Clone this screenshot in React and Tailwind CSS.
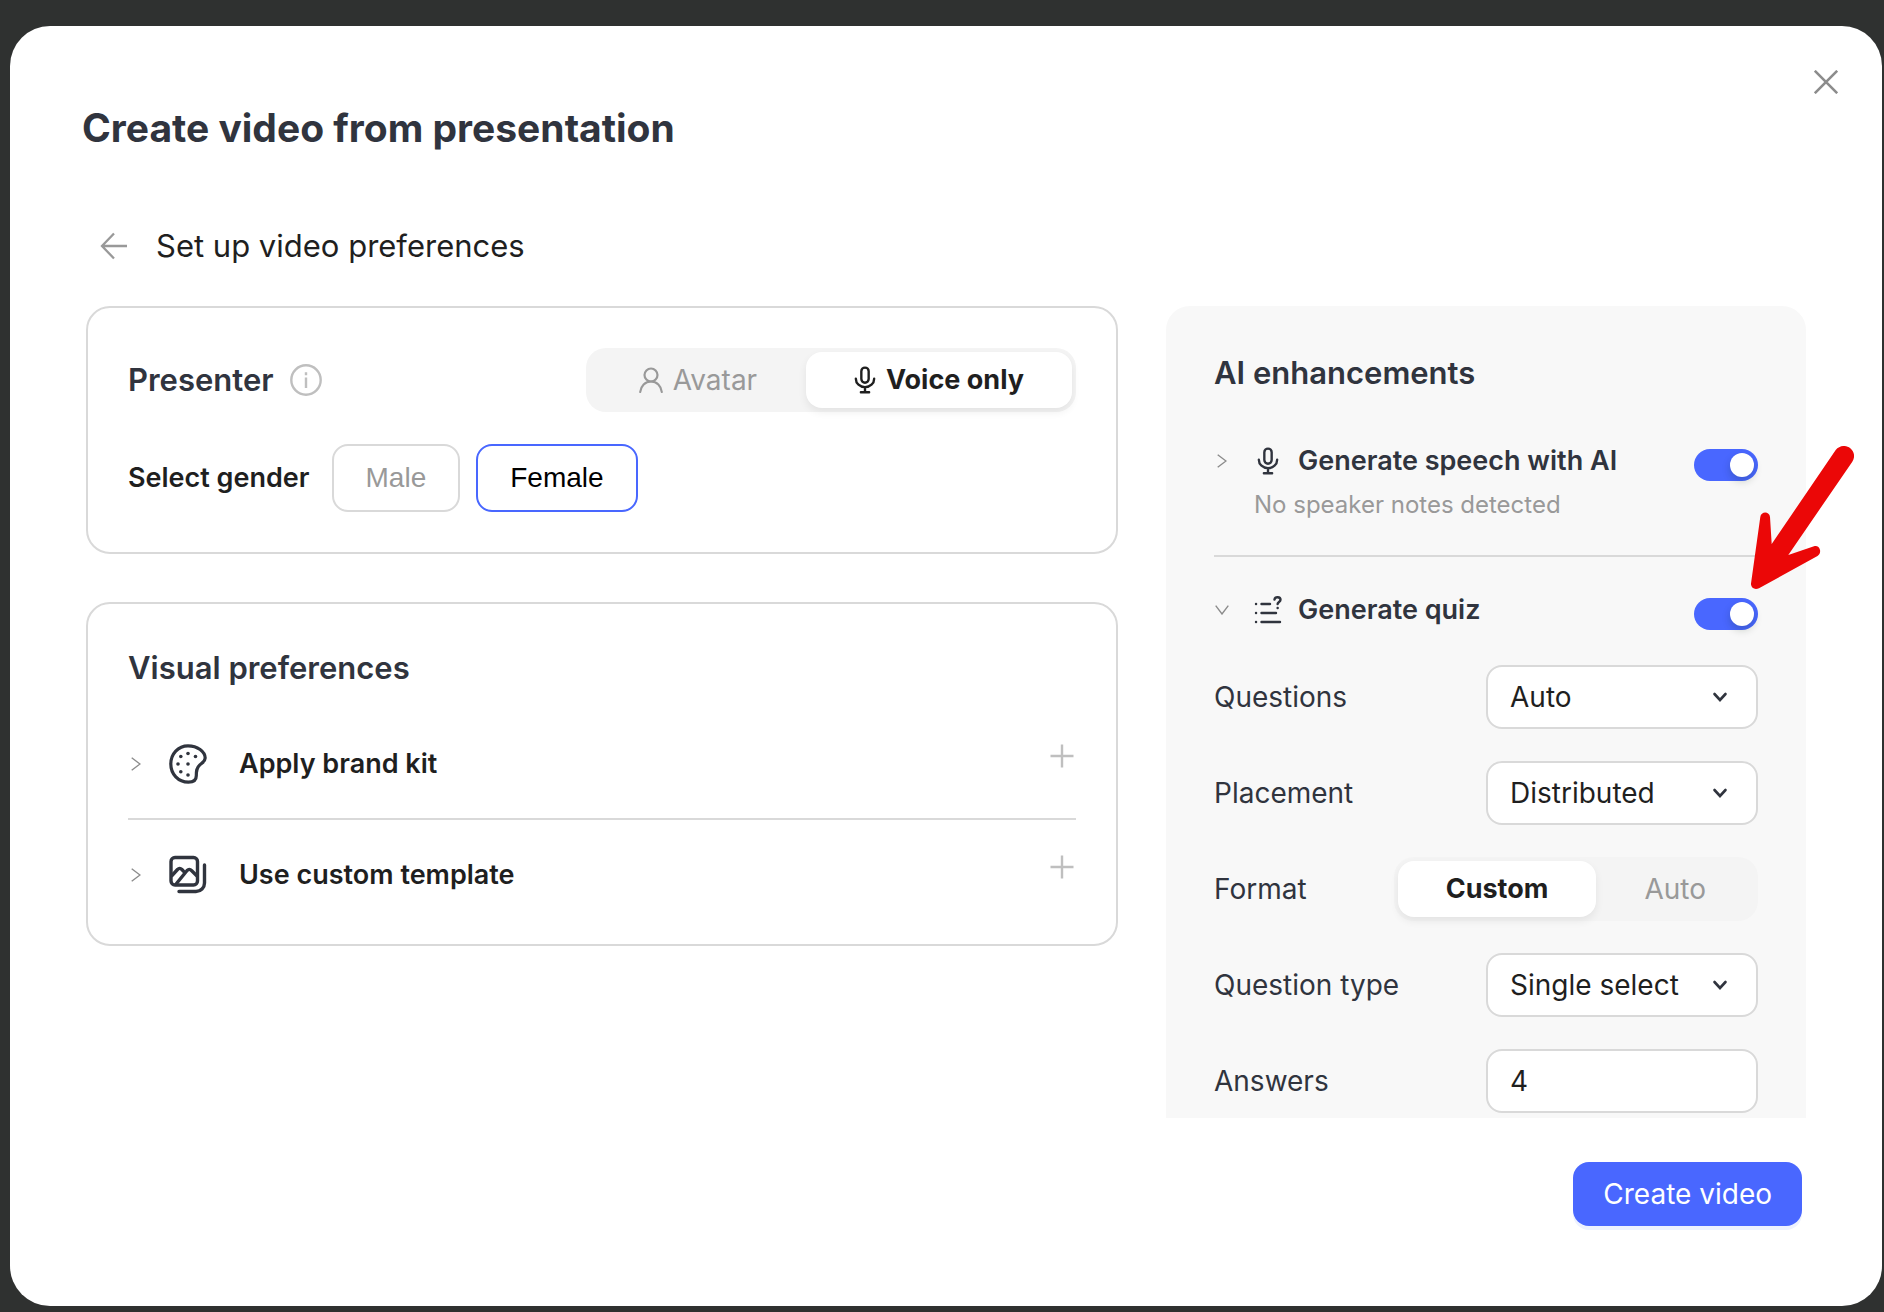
import React, { useState } from "react";

const MicIcon = ({ className }) => (
  <svg className={className} viewBox="0 0 24 30" fill="none" stroke="currentColor" strokeWidth="2.6" strokeLinecap="round">
    <rect x="8" y="1.5" width="8" height="16.5" rx="4" />
    <path d="M2 13.5c0 5.2 4.4 9.3 10 9.3s10-4.100 10-9.300M12 23v5M7.500 28.300h9" />
  </svg>
);

const UserIcon = ({ className }) => (
  <svg className={className} viewBox="0 0 24 26" fill="none" stroke="currentColor" strokeWidth="2.200" strokeLinecap="round">
    <circle cx="12" cy="8" r="6.500" />
    <path d="M1.200 25C1.800 18.900 6.200 14.500 12 14.500s10.200 4.400 10.800 10.500" />
  </svg>
);

const PaletteIcon = ({ className }) => (
  <svg className={className} viewBox="0 0 38 40" fill="none" stroke="currentColor" strokeWidth="3.200">
    <path d="M19 1.800C9.200 1.800 1.800 9.900 1.800 20S9.200 38.200 19.400 38.200c5.200 0 7.900-2.300 7.900-6.400 0-5.200.2-7.800 3.300-10.700 2.500-2.300 5.600-3.600 5.600-7C36.200 7.500 28.400 1.800 19 1.800z" />
    <g fill="currentColor" stroke="none">
      <circle cx="19" cy="9.500" r="1.800" />
      <circle cx="26.500" cy="12.500" r="1.800" />
      <circle cx="11.800" cy="12.500" r="1.800" />
      <circle cx="9" cy="20" r="1.800" />
      <circle cx="19" cy="20" r="1.800" />
      <circle cx="11.800" cy="27.800" r="1.800" />
      <circle cx="19" cy="31" r="1.800" />
    </g>
  </svg>
);

const TemplateIcon = ({ className }) => (
  <svg className={className} viewBox="0 0 38 40" fill="none" stroke="currentColor" strokeWidth="3.400" strokeLinecap="round" strokeLinejoin="round">
    <rect x="2" y="2.500" width="26.500" height="27.500" rx="4" />
    <path d="M35.500 10v18a8.500 8.500 0 0 1-8.500 8.500H10M3 20.500l5.500-6q2.200-2.300 4.400 0l2 2.200M7.500 28.500l10.600-13q2.200-2.300 4.400 0l5 5" />
  </svg>
);

const QuizIcon = ({ className }) => (
  <svg className={className} viewBox="0 0 28 28" fill="none" stroke="currentColor" strokeWidth="2.400" strokeLinecap="round">
    <path d="M7.500 8h8.500M7.500 17h14.500M7.500 26h18.500" />
    <path d="M2 8h.1M2 17h.1M2 26h.1" />
    <path d="M20.500 3.500c.6-3.200 6-3 6 .3 0 2.200-2.900 2.200-2.900 4.300M23.600 12h.1" />
  </svg>
);

const Chevron = ({ className }) => (
  <svg className={className} viewBox="0 0 10 14" fill="none" stroke="currentColor" strokeWidth="1.400">
    <path d="M.700.700 9 7 .700 13.300" />
  </svg>
);

const PlusIcon = ({ className }) => (
  <svg className={className} viewBox="0 0 24 24" fill="none" stroke="currentColor" strokeWidth="2.400">
    <path d="M12 .500v23M.500 12h23" />
  </svg>
);

const Toggle = ({ id, checked, onChange }) => (
  <input
    id={id}
    type="checkbox"
    role="switch"
    checked={checked}
    onChange={(e) => onChange(e.target.checked)}
    className="mt-1 flex h-8 w-16 shrink-0 cursor-pointer appearance-none items-center rounded-full bg-[#c4c4c4] p-1 before:block before:size-6 before:rounded-full before:bg-white before:shadow-[0_4px_8px_rgba(0,35,11,0.2)] checked:justify-end checked:bg-[#4967ff]"
  />
);

const SelectField = ({ id, label, options }) => (
  <div className="flex items-center justify-between">
    <label htmlFor={id} className="text-[#30343e]">
      {label}
    </label>
    <div className="relative w-[272px]">
      <select
        id={id}
        className="h-16 w-full appearance-none rounded-2xl border-2 border-[#d9d9d9] bg-white px-[22px] text-[#1f1f1f]"
      >
        {options.map((option) => (
          <option key={option}>{option}</option>
        ))}
      </select>
      <svg
        className="pointer-events-none absolute top-[26px] right-[30px] h-3 w-4 text-[#30343e]"
        viewBox="0 0 16 12"
        fill="none"
        stroke="currentColor"
        strokeWidth="2.600"
        strokeLinecap="round"
      >
        <path d="m2.500 3 5.500 6 5.500-6" />
      </svg>
    </div>
  </div>
);

const PreferenceRow = ({ icon: Icon, title }) => (
  <div className="flex h-[110px] items-center">
    <button className="flex flex-1 items-center text-left text-[27px] font-semibold text-[#1f1f1f]">
      <Chevron className="mr-7 ml-[3px] h-3.5 w-2.5 text-[#8c8c8c]" />
      <Icon className="mr-8 h-10 w-[38px] text-[#30343e]" />
      {title}
    </button>
    <button aria-label={`Add: ${title}`} className="mr-0.5 mb-4 text-[#bfbfbf]">
      <PlusIcon className="size-6" />
    </button>
  </div>
);

const EnhancementHeader = ({ id, icon, title, open }) => (
  <div className="flex h-8 items-center text-[#30343e]">
    <button aria-label={`${title} settings`} aria-expanded={open} className="w-10 pl-[3px]">
      <Chevron className={`h-3.5 w-2.5 text-[#8c8c8c] ${open ? "rotate-90" : ""}`} />
    </button>
    <span className="mr-4 flex w-7 justify-center">{icon}</span>
    <label htmlFor={id} className="text-[27px] font-semibold">
      {title}
    </label>
  </div>
);

const segment = "flex cursor-pointer items-center justify-center rounded-2xl";
const segmentOn = "bg-white text-[27px] font-bold text-[#1f1f1f] shadow-[0_4px_8px_rgba(0,0,0,0.07)]";
const segmentOff = "text-[#999999]";

const App = () => {
  const [presenter, setPresenter] = useState("voice");
  const [gender, setGender] = useState("Female");
  const [format, setFormat] = useState("Custom");
  const [speech, setSpeech] = useState(true);
  const [quiz, setQuiz] = useState(true);

  return (
    <div className="min-h-screen bg-[#2f3130] pt-[26px] pr-0.5 pb-1.5 pl-2.5 font-['Inter',sans-serif] text-[28px] leading-8">
      <main className="relative flex min-h-[1280px] flex-col rounded-[40px] bg-white px-[76px] pt-20 pb-[76px]">
        <button aria-label="Close" className="absolute top-11 right-11 text-[#8c8c8c]">
          <svg className="size-6" viewBox="0 0 24 24" fill="none" stroke="currentColor" strokeWidth="2.600">
            <path d="m.8.800 22.400 22.400M23.200.8.800 23.200" />
          </svg>
        </button>

        <h1 className="-ml-1 text-[39px] leading-[44px] font-bold text-[#30343e]">
          Create video from presentation
        </h1>

        <div className="mt-[76px] flex h-10 items-center">
          <button aria-label="Back" className="ml-3.5 text-[#999999]">
            <svg className="size-7" viewBox="0 0 28 28" fill="none" stroke="currentColor" strokeWidth="2.300">
              <path d="M27 14H2M14 1.500 2 14l12 12.500" />
            </svg>
          </button>
          <h2 className="ml-7 text-[31px] text-[#1f1f1f]">Set up video preferences</h2>
        </div>

        <div className="mt-10 flex items-start gap-12">
          <div className="flex flex-1 flex-col gap-12">
            <section className="rounded-3xl border-2 border-[#d9d9d9] p-10">
              <div className="flex items-center justify-between">
                <h3 className="flex items-center gap-4 text-[31px] font-semibold text-[#30343e]">
                  Presenter
                  <svg className="size-8 text-[#bfbfbf]" viewBox="0 0 32 32" fill="none" stroke="currentColor" strokeWidth="2.400">
                    <circle cx="16" cy="16" r="14.700" />
                    <path d="M16 13.500V24M16 8.200v3" />
                  </svg>
                </h3>
                <div className="flex h-16 rounded-[20px] bg-[#f4f4f4] p-1">
                  <button
                    onClick={() => setPresenter("avatar")}
                    className={`${segment} w-[216px] gap-2.5 ${presenter === "avatar" ? segmentOn : segmentOff}`}
                  >
                    <UserIcon className="h-[26px] w-6" />
                    Avatar
                  </button>
                  <button
                    onClick={() => setPresenter("voice")}
                    className={`${segment} w-[266px] gap-2.5 ${presenter === "voice" ? segmentOn : segmentOff}`}
                  >
                    <MicIcon className="h-7 w-[22px]" />
                    Voice only
                  </button>
                </div>
              </div>

              <div className="mt-8 flex items-center gap-4">
                <span className="mr-1.5 text-[27px] font-semibold text-[#1f1f1f]">Select gender</span>
                {["Male", "Female"].map((option) => (
                  <button
                    key={option}
                    onClick={() => setGender(option)}
                    className={`h-[68px] rounded-2xl border-2 px-8 font-['Liberation_Sans',sans-serif] ${
                      gender === option ? "border-[#4967ff] text-black" : "border-[#d9d9d9] text-[#999999]"
                    }`}
                  >
                    {option}
                  </button>
                ))}
              </div>
            </section>

            <section className="rounded-3xl border-2 border-[#d9d9d9] px-10 pt-12 pb-3.5">
              <h3 className="mb-[26px] text-[31px] font-semibold text-[#30343e]">Visual preferences</h3>
              <div className="divide-y-2 divide-[#d9d9d9]">
                <PreferenceRow icon={PaletteIcon} title="Apply brand kit" />
                <PreferenceRow icon={TemplateIcon} title="Use custom template" />
              </div>
            </section>
          </div>

          <aside className="h-[812px] w-[640px] overflow-hidden rounded-t-3xl bg-[#f8f8f8] px-12 pt-[51px]">
            <h3 className="text-[31px] font-semibold text-[#30343e]">AI enhancements</h3>

            <div className="mt-14 flex items-start justify-between border-b-2 border-[#d9d9d9] pb-[34px]">
              <div>
                <EnhancementHeader id="speech" icon={<MicIcon className="h-7 w-[22px]" />} title="Generate speech with AI" />
                <p className="mt-3 pl-10 text-[24px] text-[#999999]">No speaker notes detected</p>
              </div>
              <Toggle id="speech" checked={speech} onChange={setSpeech} />
            </div>

            <div className="mt-[37px] flex items-start justify-between">
              <EnhancementHeader id="quiz" icon={<QuizIcon className="size-7" />} title="Generate quiz" open />
              <Toggle id="quiz" checked={quiz} onChange={setQuiz} />
            </div>

            <div className="mt-[35px] flex flex-col gap-8">
              <SelectField id="questions" label="Questions" options={["Auto", "5", "10"]} />
              <SelectField id="placement" label="Placement" options={["Distributed", "At the end"]} />
              <div className="flex items-center justify-between">
                <span className="text-[#30343e]">Format</span>
                <div className="flex h-16 rounded-[20px] bg-[#f4f4f4] p-1">
                  {["Custom", "Auto"].map((option) => (
                    <button
                      key={option}
                      onClick={() => setFormat(option)}
                      className={`${segment} px-12 ${format === option ? segmentOn : segmentOff}`}
                    >
                      {option}
                    </button>
                  ))}
                </div>
              </div>
              <SelectField id="type" label="Question type" options={["Single select", "Multi select"]} />
              <div className="flex items-center justify-between">
                <label htmlFor="answers" className="text-[#30343e]">
                  Answers
                </label>
                <input
                  id="answers"
                  defaultValue="4"
                  className="h-16 w-[272px] rounded-2xl border-2 border-[#d9d9d9] bg-white px-[22px] text-[#1f1f1f]"
                />
              </div>
            </div>
          </aside>
        </div>

        <button className="mt-11 mr-1 h-16 self-end rounded-2xl bg-[#4967ff] px-[30px] text-white shadow-[0_4px_0_#eef2ff]">
          Create video
        </button>

        {/* pointer to the quiz switch */}
        <svg className="pointer-events-none absolute top-[420px] right-[28px] h-[143px] w-[103px]" viewBox="0 0 103 143" fill="#eb0707">
          <path d="M84.700 4C88.500-.7 95-1.300 99.300 2.300c4.300 3.600 4.900 8.900 2 13.400L37.300 109l25.700-8.700c3-.9 5.300.8 6 3.800.5 2.400-.5 4.600-2.500 5.900L8 142.200c-4.300 2.200-8.400-.5-8-4.700L9.300 71c.6-6 9.300-6 9.700 0l1.700 27z" />
        </svg>
      </main>
    </div>
  );
};

export default App;
